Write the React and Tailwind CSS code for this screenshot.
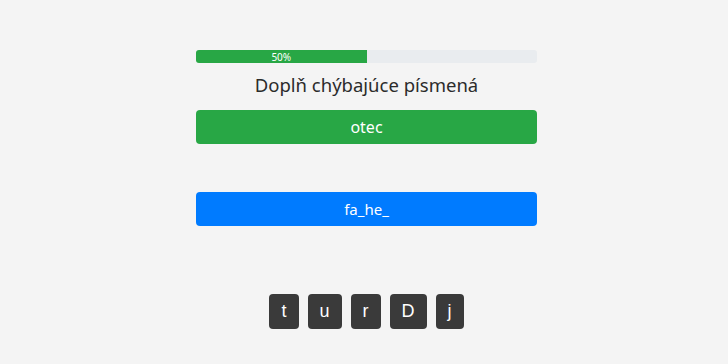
export default function App() {
  const letters = ["t", "u", "r", "D", "j"];
  return (
    <div className="min-h-[364px] bg-[#f4f4f4] pl-[5px] font-['Noto_Sans',sans-serif]">
      <div className="mx-auto w-[341px] pt-[50px]">
        <div className="flex h-[13px] overflow-hidden rounded-[3px] bg-[#e9ecef]">
          <div className="flex w-1/2 items-center justify-center bg-[#28a745] text-[10px] leading-none text-white">
            50%
          </div>
        </div>
        <h1 className="mt-[8px] text-center text-[18.5px] leading-[28px] text-[#2b2b2b]">
          Doplň chýbajúce písmená
        </h1>
        <button className="mt-[11px] flex h-[34px] w-full items-center justify-center rounded-[4px] bg-[#28a745] text-[16px] text-white">
          otec
        </button>
        <button className="mt-[48px] flex h-[34px] w-full items-center justify-center rounded-[4px] bg-[#007bff] text-[15px] text-white">
          fa_he_
        </button>
        <div className="mt-[68px] flex justify-center gap-[9px]">
          {letters.map((l) => (
            <span
              key={l}
              className="flex h-[35px] items-center rounded-[4px] bg-[#3a3a3a] px-[12px] font-['Liberation_Sans',sans-serif] text-[18px] text-white"
            >
              {l}
            </span>
          ))}
        </div>
      </div>
    </div>
  );
}
